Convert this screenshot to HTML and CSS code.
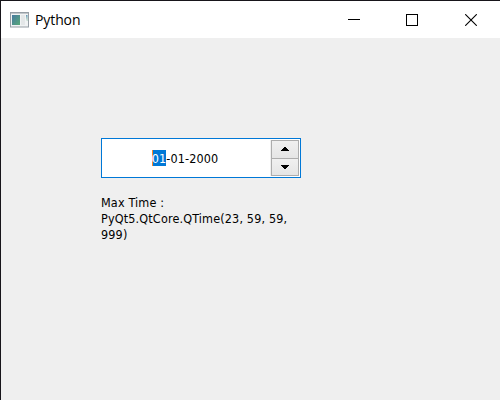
FILE: index.html
```html
<!DOCTYPE html>
<html lang="en">
<head>
<meta charset="utf-8">
<title>Python</title>
<link rel="stylesheet" href="styles.css">
</head>
<body>
<div class="window">
  <header class="titlebar">
    <svg class="app-icon" width="19" height="16" viewBox="0 0 19 16">
      <defs>
        <linearGradient id="pane" x1="0" y1="0" x2="1" y2="1"><stop offset="0" stop-color="#4779a0"/><stop offset="1" stop-color="#58a978"/></linearGradient>
        <linearGradient id="side" x1="0" y1="0" x2="0" y2="1"><stop offset="0" stop-color="#5b91b5"/><stop offset="1" stop-color="#a3d0ae"/></linearGradient>
      </defs>
      <rect x=".5" y=".5" width="18" height="14.5" fill="#f1f3f4" stroke="#969ea5"/>
      <path d="M1 1.5H18" stroke="#c1c6ca"/>
      <rect x="2" y="3" width="8" height="10" fill="url(#pane)"/>
      <path d="M11 3H15V13H11Z" fill="#e4e7e8"/>
      <path d="M16 3H17.5V9H16.8Z" fill="url(#side)"/>
    </svg>
    <h1 class="title">Python</h1>
    <div class="controls">
      <svg width="12" height="12" viewBox="0 0 12 12" shape-rendering="crispEdges"><path d="M0 5.5H12" stroke="#000"/></svg>
      <svg width="12" height="12" viewBox="0 0 12 12" shape-rendering="crispEdges"><rect x=".5" y=".5" width="11" height="11" fill="none" stroke="#000"/></svg>
      <svg class="close" width="12" height="12" viewBox="0 0 12 12"><path d="M.2.2 11.8 11.8M11.8.2.2 11.8" stroke="#000" stroke-width="1.1"/></svg>
    </div>
  </header>
  <main class="content">
    <div class="date-edit">
      <div class="date"><span class="selected">01</span>-01-2000</div>
      <div class="spinner">
        <div class="step"><svg width="8" height="4" viewBox="0 0 8 4" shape-rendering="crispEdges"><path d="M3 0H5V1H6V2H7V3H8V4H0V3H1V2H2V1H3Z"/></svg></div>
        <div class="step"><svg width="8" height="4" viewBox="0 0 8 4" shape-rendering="crispEdges"><path d="M0 0H8V1H7V2H6V3H5V4H3V3H2V2H1V1H0Z"/></svg></div>
      </div>
    </div>
    <p class="label">Max Time :<br>PyQt5.QtCore.QTime(23, 59, 59,<br>999)</p>
  </main>
</div>
</body>
</html>
```
FILE: styles.css
```css
* { box-sizing: border-box; }
body { margin: 0; }
.window {
  width: 500px;
  height: 400px;
  overflow: hidden;
  background: #efefef;
  border-top: 1px solid #17151a;
  border-left: 1px solid #17151a;
  color: #000;
}
.titlebar {
  display: flex;
  align-items: center;
  height: 37px;
  padding: 0 23px 0 9px;
  background: #fff;
}
.app-icon { flex: none; }
.title {
  margin: 0 0 0 6px;
  font: 400 14px/20px "Open Sans", sans-serif;
  letter-spacing: -0.1px;
}
.controls {
  display: flex;
  gap: 46px;
  margin-left: auto;
}
.close { margin-left: 1px; }
.content { padding: 100px; }
.date-edit {
  display: flex;
  width: 200px;
  height: 40px;
  padding: 1px;
  background: #fff;
  border: 1px solid #0078d7;
}
.date {
  flex: 1;
  padding: 10px 4px 0 0;
  text-align: center;
  font: 12.5px/18px "DejaVu Sans Condensed", "DejaVu Sans", sans-serif;
  font-stretch: condensed;
  letter-spacing: 0.1px;
  white-space: nowrap;
}
.selected {
  display: inline-block;
  background:
    linear-gradient(#ff8728, #ff8728) 0 0 / 1px 16px no-repeat,
    linear-gradient(#0078d7, #0078d7) 0 0 / 100% 16px no-repeat;
  color: #fff;
}
.spinner {
  display: flex;
  flex-direction: column;
  width: 28px;
  height: 36px;
  border: 1px solid #adadad;
  box-shadow: -1px 0 #f0f0f0;
}
.step {
  display: flex;
  flex: 1;
  align-items: center;
  justify-content: center;
  background: linear-gradient(#f0f0f0, #e5e5e5);
}
.step + .step { border-top: 1px solid #adadad; }
.label {
  margin: 17px 0 0;
  font: 12.5px/16px "DejaVu Sans Condensed", "DejaVu Sans", sans-serif;
  font-stretch: condensed;
  letter-spacing: 0.15px;
  white-space: nowrap;
}
```
